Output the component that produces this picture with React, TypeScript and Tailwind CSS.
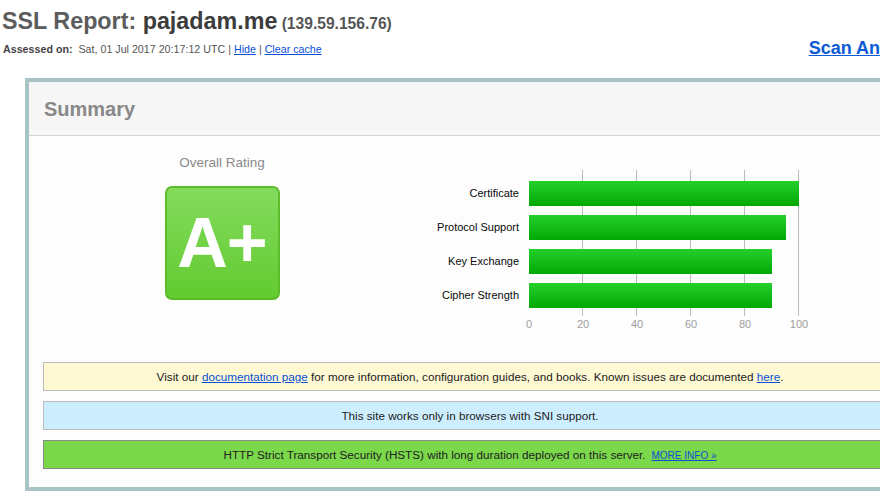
import React from 'react';

// Bar scores for the summary chart (0..100, 2.7px per point).
const scores = [
  { label: 'Certificate', value: 100 },
  { label: 'Protocol Support', value: 95 },
  { label: 'Key Exchange', value: 90 },
  { label: 'Cipher Strength', value: 90 },
];

const ticks = [0, 20, 40, 60, 80, 100];

function RatingChart() {
  return (
    <div className="flex mt-[15px] ml-[98px]">
      {/* Labels column */}
      <div className="w-[99px] pt-[11px] flex flex-col gap-[9px]">
        {scores.map((s) => (
          <div key={s.label} className="h-[25px] flex items-center justify-end text-[11px] text-[#0a0a0a] whitespace-nowrap">
            {s.label}
          </div>
        ))}
      </div>

      {/* Plot area */}
      <div className="ml-[10px] w-[270px]">
        <div className="relative h-[146px]">
          {ticks.slice(1).map((t) => (
            <div
              key={t}
              className="absolute top-0 bottom-0 w-px bg-[#bdbdbd]"
              style={{ left: t * 2.7 - 1 }}
            />
          ))}
          <div className="relative pt-[11px] flex flex-col gap-[9px]">
            {scores.map((s) => (
              <div
                key={s.label}
                className="h-[25px] bg-gradient-to-b from-[#24d02a] to-[#00a800]"
                style={{ width: s.value * 2.7 }}
              />
            ))}
          </div>
        </div>
        <div className="mt-[1px] flex justify-between text-[11px] leading-[14px] text-[#a0a0a0]">
          {ticks.map((t) => (
            <div key={t} className="w-0 flex justify-center">
              <span>{t}</span>
            </div>
          ))}
        </div>
      </div>
    </div>
  );
}

export default function App() {
  return (
    <div className="w-[880px] h-[500px] overflow-hidden bg-white font-['Liberation_Sans',Arial,sans-serif]">
      <div className="w-[940px]">
        {/* Report title */}
        <h1 className="pt-[7px] pl-[2px] leading-[28px] font-bold whitespace-nowrap">
          <span className="text-[23.3px] text-[#5c5c5c]">SSL Report: </span>
          <span className="text-[23.3px] text-[#3c3c3c]">pajadam.me</span>
          <span className="text-[15.6px] text-[#555]"> (139.59.156.76)</span>
        </h1>

        {/* Assessed line + scan link */}
        <div className="flex items-start">
          <div className="mt-[4px] pl-[3px] text-[10.7px] leading-[14px] text-[#555] whitespace-nowrap">
            <span className="font-bold text-[#444]">Assessed on:</span>
            {'\u00a0\u00a0'}Sat, 01 Jul 2017 20:17:12 UTC |{' '}
            <a className="text-[#0b4fd6] underline">Hide</a> |{' '}
            <a className="text-[#0b4fd6] underline">Clear cache</a>
          </div>
          <a className="ml-auto mt-[-1px] text-[18px] leading-[22px] font-bold text-[#0d5bd4] underline whitespace-nowrap">
            Scan Another »
          </a>
        </div>

        {/* Summary box */}
        <div className="mt-[19px] ml-[25px] w-[890px] border-4 border-[#a8c4c4]">
          <div className="h-[54px] bg-[#f6f6f6] border-b border-[#cbd6d6] flex items-center pl-[15px]">
            <h2 className="text-[20px] font-bold text-[#888]">Summary</h2>
          </div>

          <div className="bg-[#fdfdfd] pt-[19px] pb-[18px]">
            <div className="flex items-start pl-[93px]">
              {/* Overall rating */}
              <div className="w-[200px] flex flex-col items-center">
                <div className="text-[13.5px] leading-[16px] text-[#8a8a8a]">Overall Rating</div>
                <div className="mt-[15px] w-[115px] h-[114px] rounded-[7px] border-2 border-[#5cbd2c] bg-gradient-to-b from-[#84db5c] to-[#62cb2e] flex items-center justify-center">
                  <span className="text-[70px] leading-none font-bold text-white tracking-[-1px]">A+</span>
                </div>
              </div>

              <RatingChart />
            </div>

            {/* Notices */}
            <div className="mt-[31px] px-[14px] flex flex-col gap-[10px] text-[11.7px] text-[#222]">
              <div className="h-[29px] border border-[#bcbcbc] bg-[#fef9d3] flex items-center justify-center whitespace-nowrap">
                <span>
                  Visit our <a className="text-[#0b4fd6] underline">documentation page</a> for more information,
                  configuration guides, and books. Known issues are documented{' '}
                  <a className="text-[#0b4fd6] underline">here</a>.
                </span>
              </div>
              <div className="h-[29px] border border-[#bcbcbc] bg-[#cdeeff] flex items-center justify-center whitespace-nowrap">
                This site works only in browsers with SNI support.
              </div>
              <div className="h-[29px] border border-[#8a8a8a] bg-[#7ad84a] flex items-center justify-center whitespace-nowrap">
                <span>
                  HTTP Strict Transport Security (HSTS) with long duration deployed on this server.
                  <a className="ml-[6px] text-[10px] text-[#0b4fd6] underline">MORE INFO »</a>
                </span>
              </div>
            </div>
          </div>
        </div>
      </div>
    </div>
  );
}
